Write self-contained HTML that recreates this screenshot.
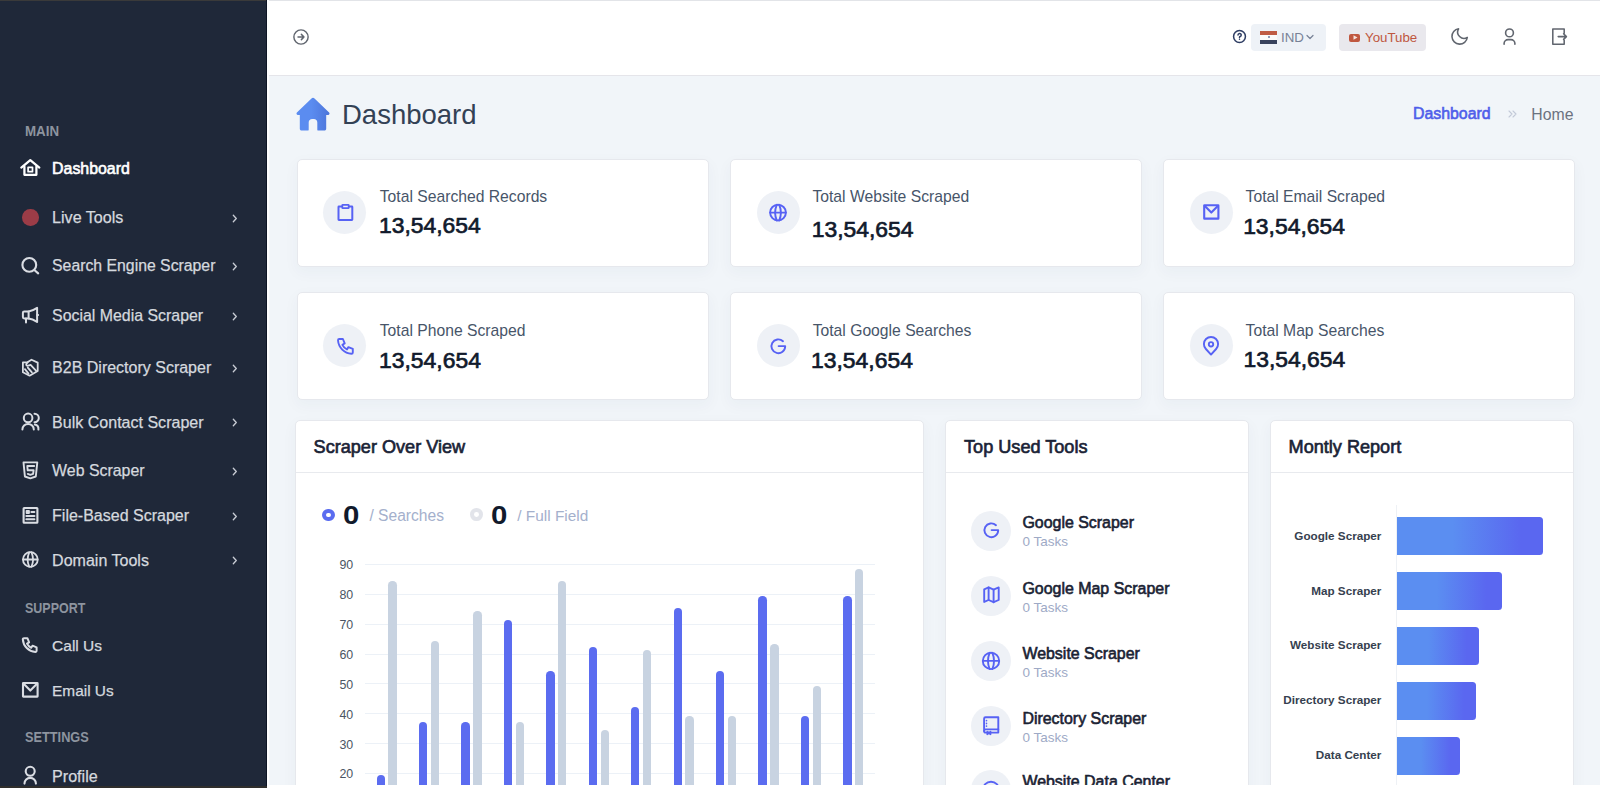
<!DOCTYPE html>
<html><head><meta charset="utf-8"><title>Dashboard</title>
<style>
*{box-sizing:border-box;margin:0;padding:0}
html,body{width:1600px;height:788px;overflow:hidden}
body{font-family:"Liberation Sans",sans-serif;background:#f1f5f9;position:relative}
.a{position:absolute}
.t{position:absolute;line-height:1;white-space:nowrap}
.card{background:#fff;border:1px solid #e6e8ed;border-radius:5px;box-shadow:0 5px 14px 2px rgba(40,55,90,0.032)}
</style></head><body>
<div class="a" style="left:0;top:0;width:266px;height:788px;background:#1f2839"></div>
<div class="a" style="left:266px;top:0;width:1px;height:788px;background:#0c1424"></div>
<div class="a" style="left:267px;top:0;width:2px;height:788px;background:#fdfdfe"></div>
<div class="a" style="left:0;top:0;width:266px;height:1px;background:#3a3a3a"></div>
<div class="a" style="left:0;top:786px;width:267px;height:2px;background:#2f2e2c"></div>
<div class="t" style="left:25.01px;top:123.72px;font-size:14.1px;font-weight:700;color:#8d949f;transform:scaleX(0.945);transform-origin:0 0">MAIN</div>
<div class="t" style="left:25.01px;top:600.72px;font-size:14.1px;font-weight:700;color:#8d949f;transform:scaleX(0.885);transform-origin:0 0">SUPPORT</div>
<div class="t" style="left:25.01px;top:729.72px;font-size:14.1px;font-weight:700;color:#8d949f;transform:scaleX(0.905);transform-origin:0 0">SETTINGS</div>
<div class="t" style="left:52.09px;top:161.19px;font-size:15.9px;font-weight:400;color:#ffffff;-webkit-text-stroke:0.6px #ffffff">Dashboard</div>
<div class="t" style="left:52.07px;top:209.41px;font-size:16.1px;font-weight:400;color:#d5d9df;-webkit-text-stroke:0.25px #d5d9df">Live Tools</div>
<div class="t" style="left:52.09px;top:257.67px;font-size:15.8px;font-weight:400;color:#d5d9df;-webkit-text-stroke:0.25px #d5d9df">Search Engine Scraper</div>
<div class="t" style="left:52.09px;top:307.58px;font-size:15.9px;font-weight:400;color:#d5d9df;-webkit-text-stroke:0.25px #d5d9df">Social Media Scraper</div>
<div class="t" style="left:52.08px;top:360.00px;font-size:16.0px;font-weight:400;color:#d5d9df;-webkit-text-stroke:0.25px #d5d9df">B2B Directory Scraper</div>
<div class="t" style="left:52.08px;top:413.96px;font-size:16.05px;font-weight:400;color:#d5d9df;-webkit-text-stroke:0.25px #d5d9df">Bulk Contact Scraper</div>
<div class="t" style="left:52.09px;top:462.58px;font-size:15.9px;font-weight:400;color:#d5d9df;-webkit-text-stroke:0.25px #d5d9df">Web Scraper</div>
<div class="t" style="left:52.08px;top:507.50px;font-size:16.0px;font-weight:400;color:#d5d9df;-webkit-text-stroke:0.25px #d5d9df">File-Based Scraper</div>
<div class="t" style="left:52.08px;top:552.06px;font-size:16.05px;font-weight:400;color:#d5d9df;-webkit-text-stroke:0.25px #d5d9df">Domain Tools</div>
<div class="t" style="left:52.12px;top:638.23px;font-size:15.5px;font-weight:400;color:#d5d9df;-webkit-text-stroke:0.25px #d5d9df">Call Us</div>
<div class="t" style="left:52.12px;top:682.81px;font-size:15.4px;font-weight:400;color:#d5d9df;-webkit-text-stroke:0.25px #d5d9df">Email Us</div>
<div class="t" style="left:52.07px;top:767.52px;font-size:16.1px;font-weight:400;color:#d5d9df;-webkit-text-stroke:0.25px #d5d9df">Profile</div>
<svg class="a" style="left:231px;top:213.7px;" width="8" height="9" viewBox="0 0 8 9" fill="none" stroke="#c9cdd5" stroke-width="1.3" stroke-linecap="round" stroke-linejoin="round"><path d="M2.3 1.3l3 3.2-3 3.2"/></svg>
<svg class="a" style="left:231px;top:261.7px;" width="8" height="9" viewBox="0 0 8 9" fill="none" stroke="#c9cdd5" stroke-width="1.3" stroke-linecap="round" stroke-linejoin="round"><path d="M2.3 1.3l3 3.2-3 3.2"/></svg>
<svg class="a" style="left:231px;top:311.7px;" width="8" height="9" viewBox="0 0 8 9" fill="none" stroke="#c9cdd5" stroke-width="1.3" stroke-linecap="round" stroke-linejoin="round"><path d="M2.3 1.3l3 3.2-3 3.2"/></svg>
<svg class="a" style="left:231px;top:364.2px;" width="8" height="9" viewBox="0 0 8 9" fill="none" stroke="#c9cdd5" stroke-width="1.3" stroke-linecap="round" stroke-linejoin="round"><path d="M2.3 1.3l3 3.2-3 3.2"/></svg>
<svg class="a" style="left:231px;top:418.2px;" width="8" height="9" viewBox="0 0 8 9" fill="none" stroke="#c9cdd5" stroke-width="1.3" stroke-linecap="round" stroke-linejoin="round"><path d="M2.3 1.3l3 3.2-3 3.2"/></svg>
<svg class="a" style="left:231px;top:466.7px;" width="8" height="9" viewBox="0 0 8 9" fill="none" stroke="#c9cdd5" stroke-width="1.3" stroke-linecap="round" stroke-linejoin="round"><path d="M2.3 1.3l3 3.2-3 3.2"/></svg>
<svg class="a" style="left:231px;top:511.70000000000005px;" width="8" height="9" viewBox="0 0 8 9" fill="none" stroke="#c9cdd5" stroke-width="1.3" stroke-linecap="round" stroke-linejoin="round"><path d="M2.3 1.3l3 3.2-3 3.2"/></svg>
<svg class="a" style="left:231px;top:556.3px;" width="8" height="9" viewBox="0 0 8 9" fill="none" stroke="#c9cdd5" stroke-width="1.3" stroke-linecap="round" stroke-linejoin="round"><path d="M2.3 1.3l3 3.2-3 3.2"/></svg>
<svg class="a" style="left:18px;top:155px" width="24" height="24" viewBox="0 0 24 24" fill="none" stroke="#ffffff" stroke-width="2.25" stroke-linecap="round" stroke-linejoin="round"><path d="M3.3 12.6L12.3 5.2L21.3 12.6"/><path d="M6.4 11.6V19.8H18.4V11.6"/><rect x="10.1" y="12.3" width="4.4" height="4.4" stroke-width="1.7"/></svg>
<div class="a" style="left:22px;top:209px;width:16.5px;height:16.5px;border-radius:50%;background:#9b3c47"></div>
<svg class="a" style="left:18px;top:253px" width="24" height="24" viewBox="0 0 24 24" fill="none" stroke="#dadde3" stroke-width="2.1" stroke-linecap="round" stroke-linejoin="round"><circle cx="11.3" cy="11.9" r="6.9"/><path d="M16.6 17.2L20.2 20.4"/></svg>
<svg class="a" style="left:18px;top:303px" width="24" height="24" viewBox="0 0 24 24" fill="none" stroke="#dadde3" stroke-width="2" stroke-linecap="round" stroke-linejoin="round"><path d="M6.2 8.4H10.6V15.4H6.2A1.3 1.3 0 0 1 4.9 14.1V9.7A1.3 1.3 0 0 1 6.2 8.4z"/><path d="M10.6 8.4C13.6 8.2 16.3 6.8 19.1 4.9V18.9C16.3 17 13.6 15.6 10.6 15.4"/><path d="M8 15.6V19.6"/><path d="M19.3 11.9h0.8"/></svg>
<svg class="a" style="left:18px;top:355px" width="24" height="24" viewBox="0 0 24 24" fill="none" stroke="#dadde3" stroke-width="1.8" stroke-linecap="round" stroke-linejoin="round"><path d="M4.9 7.4L9.4 7.3L13.5 4.7L19.7 7.6V15.9L11.6 20.7L4.9 17.2z"/><path d="M9.6 7.4C7.9 8.6 7.6 10.6 9.5 10.9L12.6 9.9L18.2 15.8"/><path d="M6.9 14.1L10.5 18.6"/><path d="M9.8 12.6L13.9 17.4"/></svg>
<svg class="a" style="left:18px;top:409px" width="24" height="24" viewBox="0 0 24 24" fill="none" stroke="#dadde3" stroke-width="2" stroke-linecap="round" stroke-linejoin="round"><circle cx="10.1" cy="8.9" r="4.3"/><path d="M16.5 4.7a4.3 4.3 0 0 1 0 8.6"/><path d="M4.4 20.6a5.7 5.7 0 0 1 11.4 0"/><path d="M16.8 15.6a4.6 4.6 0 0 1 3.6 5"/></svg>
<svg class="a" style="left:18px;top:458px" width="24" height="24" viewBox="0 0 24 24" fill="none" stroke="#dadde3" stroke-width="1.9" stroke-linecap="round" stroke-linejoin="round"><path d="M5.5 4.4H19.3L17.8 18.5L12.3 20.4L6.9 18.5z"/><path d="M16.2 8H9.3L9.7 12.3H15.6L15.1 15.8L12.3 16.8L9.8 15.9"/></svg>
<svg class="a" style="left:18px;top:503px" width="24" height="24" viewBox="0 0 24 24" fill="none" stroke="#dadde3" stroke-width="2.1" stroke-linecap="round" stroke-linejoin="round"><rect x="5.6" y="5" width="13.8" height="14.8" rx="0.6"/><rect x="8.6" y="8" width="2.4" height="2" stroke-width="1.8"/><path d="M13.4 9h2.9M8.4 13h8M8.4 16.3h8"/></svg>
<svg class="a" style="left:18px;top:547px" width="24" height="24" viewBox="0 0 24 24" fill="none" stroke="#dadde3" stroke-width="1.8" stroke-linecap="round" stroke-linejoin="round"><circle cx="12.35" cy="12.5" r="7.4"/><path d="M5.2 12.5h14.3"/><path d="M11.2 5.3c-1.9 4.5-1.9 9.9 0 14.4M13.5 5.3c1.9 4.5 1.9 9.9 0 14.4"/></svg>
<svg class="a" style="left:18px;top:633px" width="24" height="24" viewBox="0 0 24 24" fill="none" stroke="#dadde3" stroke-width="2" stroke-linecap="round" stroke-linejoin="round"><path d="M6 5.2h3.4l1.7 4.1-2.1 1.3a9.3 9.3 0 0 0 4.2 4.2l1.3-2.1 4.1 1.7v3.4a1.2 1.2 0 0 1-1.2 1.2A13.6 13.6 0 0 1 4.8 6.4 1.2 1.2 0 0 1 6 5.2"/></svg>
<svg class="a" style="left:18px;top:678px" width="24" height="24" viewBox="0 0 24 24" fill="none" stroke="#dadde3" stroke-width="2.1" stroke-linecap="round" stroke-linejoin="round"><rect x="5" y="5" width="14.6" height="13.6" rx="0.3"/><path d="M5.6 5.8L12.3 12.6L19 5.8"/></svg>
<svg class="a" style="left:18px;top:762px" width="24" height="24" viewBox="0 0 24 24" fill="none" stroke="#dadde3" stroke-width="2.1" stroke-linecap="round" stroke-linejoin="round"><circle cx="12.2" cy="9.3" r="4.5"/><path d="M6.5 21.6a5.7 5.7 0 0 1 11.4 0"/></svg>
<div class="a" style="left:269px;top:0;width:1331px;height:75px;background:#fff"></div>
<div class="a" style="left:269px;top:0;width:1331px;height:1px;background:#e2e4e8"></div>
<div class="a" style="left:269px;top:75px;width:1331px;height:1px;background:#e5e5ea"></div>
<svg class="a" style="left:292px;top:28px;" width="18" height="18" viewBox="0 0 24 24" fill="none" stroke="#61666f" stroke-width="1.9" stroke-linecap="round" stroke-linejoin="round"><circle cx="12" cy="12" r="9.5"/><path d="M8 12h8M12.5 8.5L16 12l-3.5 3.5"/></svg>
<svg class="a" style="left:1232px;top:28.5px;" width="15" height="15" viewBox="0 0 24 24" fill="none" stroke="#2e3d63" stroke-width="2.4" stroke-linecap="round" stroke-linejoin="round"><circle cx="12" cy="12" r="9.5"/><path d="M12 16.5v.01M12 13.5a1.5 1.5 0 0 1 1-1.4 2.6 2.6 0 1 0-3.4-2.6"/></svg>
<div class="a" style="left:1251px;top:24px;width:75px;height:27px;border-radius:4px;background:#eef2f7"></div>
<div class="a" style="left:1260px;top:31px;width:17px;height:4px;background:#bf5b44"></div>
<div class="a" style="left:1260px;top:35px;width:17px;height:4.5px;background:#fafafa"></div>
<div class="a" style="left:1260px;top:39.5px;width:17px;height:4px;background:#38425c"></div>
<div class="a" style="left:1267.5px;top:36.2px;width:2px;height:2px;border-radius:50%;background:#6a7aa0"></div>
<div class="t" style="left:1280.94px;top:31.19px;font-size:13.3px;font-weight:400;color:#778196;">IND</div>
<svg class="a" style="left:1306px;top:34px;" width="8" height="6" viewBox="0 0 8 6" fill="none" stroke="#778196" stroke-width="1.2" stroke-linecap="round" stroke-linejoin="round"><path d="M1 1.5l3 3 3-3"/></svg>
<div class="a" style="left:1339px;top:24px;width:87px;height:27px;border-radius:4px;background:#e9e8ed"></div>
<div class="a" style="left:1349px;top:33.5px;width:11px;height:8.5px;border-radius:2px;background:#c0573f"></div>
<svg class="a" style="left:1352.5px;top:35.2px" width="5" height="5" viewBox="0 0 5 5"><path d="M0.5 0.3L4.5 2.5L0.5 4.7z" fill="#f5e4de"/></svg>
<div class="t" style="left:1365.00px;top:31.19px;font-size:13.3px;font-weight:400;color:#bf573f;">YouTube</div>
<svg class="a" style="left:1440px;top:15px" width="40" height="40" viewBox="0 0 40 40" fill="none" stroke="#61666f" stroke-width="1.55" stroke-linecap="round" stroke-linejoin="round"><path d="M18.6 13.8A7.7 7.7 0 1 0 27.3 22.4A6.3 6.3 0 0 1 18.6 13.8z"/></svg>
<svg class="a" style="left:1490px;top:15px" width="40" height="40" viewBox="0 0 40 40" fill="none" stroke="#61666f" stroke-width="1.6" stroke-linecap="round" stroke-linejoin="round"><circle cx="19.5" cy="17.9" r="3.9"/><path d="M14.1 29.3V28.6A4 4 0 0 1 18.1 24.6H20.9A4 4 0 0 1 24.9 28.6V29.3"/></svg>
<svg class="a" style="left:1540px;top:15px" width="40" height="40" viewBox="0 0 40 40" fill="none" stroke="#61666f" stroke-width="1.55" stroke-linecap="round" stroke-linejoin="round"><path d="M24.2 18.2V13.9H12.8V29.3H24.2V25.2"/><path d="M18.2 21.6H26.4M23.6 18.8L26.4 21.6L23.6 24.4"/></svg>
<svg class="a" style="left:294.5px;top:97px" width="36" height="35" viewBox="0 0 36 35"><defs><linearGradient id="hg" x1="0" x2="1" y1="0" y2="0"><stop offset="0.45" stop-color="#5b8cf0"/><stop offset="1" stop-color="#4d75da"/></linearGradient></defs><path d="M18 0.8c0.6 0 1.1 0.2 1.5 0.6l14.6 14.2c0.9 0.9 0.3 2.4-1 2.4h-1.9v13.8c0 1-0.8 1.8-1.8 1.8h-6.2c-0.5 0-0.9-0.4-0.9-0.9v-7.2c0-1.9-1.5-3.4-3.4-3.4h-1.8c-1.9 0-3.4 1.5-3.4 3.4v7.2c0 0.5-0.4 0.9-0.9 0.9H6.6c-1 0-1.8-0.8-1.8-1.8V18H2.9c-1.3 0-1.9-1.5-1-2.4L16.5 1.4c0.4-0.4 0.9-0.6 1.5-0.6z" fill="url(#hg)"/></svg>
<div class="t" style="left:342.00px;top:100.83px;font-size:27.5px;font-weight:400;color:#334155;">Dashboard</div>
<div class="t" style="left:1412.93px;top:106.48px;font-size:15.9px;font-weight:400;color:#4f5eea;-webkit-text-stroke:0.6px #4f5eea">Dashboard</div>
<svg class="a" style="left:1508px;top:110px;" width="9" height="8" viewBox="0 0 9 8" fill="none" stroke="#c3cad8" stroke-width="1.1" stroke-linecap="round" stroke-linejoin="round"><path d="M1 1l3 3-3 3M5 1l3 3-3 3"/></svg>
<div class="t" style="left:1531.34px;top:106.57px;font-size:15.8px;font-weight:400;color:#6b7280;">Home</div>
<div class="a card" style="left:297.0px;top:159.0px;width:412.0px;height:108.0px"></div>
<div class="a" style="left:323.2px;top:190.5px;width:43px;height:43px;border-radius:50%;background:#eef1f6"></div>
<div class="t" style="left:379.79px;top:189.45px;font-size:15.7px;font-weight:400;color:#475569;">Total Searched Records</div>
<div class="t" style="left:378.94px;top:214.43px;font-size:22.9px;font-weight:400;color:#111a2c;-webkit-text-stroke:0.7px #111a2c">13,54,654</div>
<svg class="a" style="left:332.7px;top:200px" width="24" height="24" viewBox="0 0 24 24" fill="none" stroke="#5762f4" stroke-width="2" stroke-linecap="round" stroke-linejoin="round"><rect x="5.5" y="6.6" width="13.8" height="13.4" rx="0.4"/><rect x="9.3" y="4.9" width="6.4" height="3.2" rx="0.4" fill="#eef1f6" stroke-width="1.8"/></svg>
<div class="a card" style="left:730.0px;top:159.0px;width:412.0px;height:108.0px"></div>
<div class="a" style="left:756.7px;top:190.6px;width:43px;height:43px;border-radius:50%;background:#eef1f6"></div>
<div class="t" style="left:812.44px;top:189.45px;font-size:15.7px;font-weight:400;color:#475569;">Total Website Scraped</div>
<div class="t" style="left:811.69px;top:217.83px;font-size:22.9px;font-weight:400;color:#111a2c;-webkit-text-stroke:0.7px #111a2c">13,54,654</div>
<svg class="a" style="left:766.2px;top:200.1px" width="24" height="24" viewBox="0 0 24 24" fill="none" stroke="#5762f4" stroke-width="1.9" stroke-linecap="round" stroke-linejoin="round"><circle cx="12" cy="12.6" r="7.9"/><path d="M4.2 12.6h15.6"/><path d="M10.7 4.8c-2 5-2 10.6 0 15.6M13.3 4.8c2 5 2 10.6 0 15.6"/></svg>
<div class="a card" style="left:1163.0px;top:159.0px;width:412.0px;height:108.0px"></div>
<div class="a" style="left:1189.5px;top:190.9px;width:43px;height:43px;border-radius:50%;background:#eef1f6"></div>
<div class="t" style="left:1245.59px;top:189.45px;font-size:15.7px;font-weight:400;color:#475569;">Total Email Scraped</div>
<div class="t" style="left:1243.14px;top:215.23px;font-size:22.9px;font-weight:400;color:#111a2c;-webkit-text-stroke:0.7px #111a2c">13,54,654</div>
<svg class="a" style="left:1199px;top:200.4px" width="24" height="24" viewBox="0 0 24 24" fill="none" stroke="#5762f4" stroke-width="2.1" stroke-linecap="round" stroke-linejoin="round"><rect x="5.2" y="5.2" width="14.2" height="13.4" rx="0.2"/><path d="M5.8 6L12.3 12.6L18.8 6"/></svg>
<div class="a card" style="left:297.0px;top:292.0px;width:412.0px;height:108.0px"></div>
<div class="a" style="left:323.3px;top:324.1px;width:43px;height:43px;border-radius:50%;background:#eef1f6"></div>
<div class="t" style="left:379.79px;top:323.25px;font-size:15.7px;font-weight:400;color:#475569;">Total Phone Scraped</div>
<div class="t" style="left:379.04px;top:348.84px;font-size:22.9px;font-weight:400;color:#111a2c;-webkit-text-stroke:0.7px #111a2c">13,54,654</div>
<svg class="a" style="left:332.8px;top:333.6px" width="24" height="24" viewBox="0 0 24 24" fill="none" stroke="#5762f4" stroke-width="1.9" stroke-linecap="round" stroke-linejoin="round"><path d="M6.3 5h3.6l1.8 4.4-2.3 1.4a10 10 0 0 0 4.6 4.6l1.4-2.3 4.4 1.8v3.6a1.3 1.3 0 0 1-1.3 1.3A14.6 14.6 0 0 1 5 6.3 1.3 1.3 0 0 1 6.3 5"/></svg>
<div class="a card" style="left:730.0px;top:292.0px;width:412.0px;height:108.0px"></div>
<div class="a" style="left:756.9px;top:324.4px;width:43px;height:43px;border-radius:50%;background:#eef1f6"></div>
<div class="t" style="left:812.69px;top:323.35px;font-size:15.7px;font-weight:400;color:#475569;">Total Google Searches</div>
<div class="t" style="left:811.04px;top:348.74px;font-size:22.9px;font-weight:400;color:#111a2c;-webkit-text-stroke:0.7px #111a2c">13,54,654</div>
<svg class="a" style="left:766.4px;top:333.9px" width="24" height="24" viewBox="0 0 24 24" fill="none" stroke="#5762f4" stroke-width="1.9" stroke-linecap="round" stroke-linejoin="round"><path d="M12.6 12.1H19.2M19.2 12.3A6.9 6.9 0 1 1 17 7.2"/></svg>
<div class="a card" style="left:1163.0px;top:292.0px;width:412.0px;height:108.0px"></div>
<div class="a" style="left:1189.5px;top:324.1px;width:43px;height:43px;border-radius:50%;background:#eef1f6"></div>
<div class="t" style="left:1245.59px;top:323.25px;font-size:15.7px;font-weight:400;color:#475569;">Total Map Searches</div>
<div class="t" style="left:1243.44px;top:347.63px;font-size:22.9px;font-weight:400;color:#111a2c;-webkit-text-stroke:0.7px #111a2c">13,54,654</div>
<svg class="a" style="left:1199px;top:333.6px" width="24" height="24" viewBox="0 0 24 24" fill="none" stroke="#5762f4" stroke-width="1.9" stroke-linecap="round" stroke-linejoin="round"><circle cx="12" cy="10.3" r="2.2"/><path d="M12 20.6L6.9 15A7.1 7.1 0 1 1 17.1 15z"/></svg>
<div class="a card" style="left:295px;top:420px;width:629px;height:400px"></div>
<div class="a" style="left:296px;top:472px;width:627px;height:1px;background:#e8eaee"></div>
<div class="t" style="left:313.58px;top:437.71px;font-size:18.1px;font-weight:400;color:#1a2336;-webkit-text-stroke:0.65px #1a2336">Scraper Over View</div>
<div class="a card" style="left:945px;top:420px;width:304px;height:400px"></div>
<div class="a" style="left:946px;top:472px;width:302px;height:1px;background:#e8eaee"></div>
<div class="t" style="left:964.08px;top:437.71px;font-size:18.1px;font-weight:400;color:#1a2336;-webkit-text-stroke:0.65px #1a2336">Top Used Tools</div>
<div class="a card" style="left:1270px;top:420px;width:304px;height:400px"></div>
<div class="a" style="left:1271px;top:472px;width:302px;height:1px;background:#e8eaee"></div>
<div class="t" style="left:1288.58px;top:437.71px;font-size:18.1px;font-weight:400;color:#1a2336;-webkit-text-stroke:0.65px #1a2336">Montly Report</div>
<div class="a" style="left:322px;top:508.7px;width:12.6px;height:12.6px;border-radius:50%;border:4.2px solid #5a6cf0;background:#fff"></div>
<div class="t" style="left:343.31px;top:503.17px;font-size:25.8px;font-weight:700;color:#111a2c;transform:scaleX(1.14);transform-origin:0 0">0</div>
<div class="t" style="left:369.40px;top:507.64px;font-size:15.6px;font-weight:400;color:#a4b0cc;">/ Searches</div>
<div class="a" style="left:470px;top:508.4px;width:12.8px;height:12.8px;border-radius:50%;border:4.2px solid #e2e4ea;background:#fff"></div>
<div class="t" style="left:491.11px;top:503.37px;font-size:25.8px;font-weight:700;color:#111a2c;transform:scaleX(1.14);transform-origin:0 0">0</div>
<div class="t" style="left:517.30px;top:507.81px;font-size:15.4px;font-weight:400;color:#a4b0cc;">/ Full Field</div>
<div class="a" style="left:364.6px;top:563.8px;width:510px;height:1px;background:#ecf1f7"></div>
<div class="t" style="left:339.40px;top:559.16px;font-size:12.4px;font-weight:400;color:#4b5563;">90</div>
<div class="a" style="left:364.6px;top:593.7px;width:510px;height:1px;background:#ecf1f7"></div>
<div class="t" style="left:339.40px;top:589.06px;font-size:12.4px;font-weight:400;color:#4b5563;">80</div>
<div class="a" style="left:364.6px;top:623.6px;width:510px;height:1px;background:#ecf1f7"></div>
<div class="t" style="left:339.40px;top:618.96px;font-size:12.4px;font-weight:400;color:#4b5563;">70</div>
<div class="a" style="left:364.6px;top:653.5px;width:510px;height:1px;background:#ecf1f7"></div>
<div class="t" style="left:339.40px;top:648.86px;font-size:12.4px;font-weight:400;color:#4b5563;">60</div>
<div class="a" style="left:364.6px;top:683.4px;width:510px;height:1px;background:#ecf1f7"></div>
<div class="t" style="left:339.40px;top:678.76px;font-size:12.4px;font-weight:400;color:#4b5563;">50</div>
<div class="a" style="left:364.6px;top:713.3px;width:510px;height:1px;background:#ecf1f7"></div>
<div class="t" style="left:339.40px;top:708.66px;font-size:12.4px;font-weight:400;color:#4b5563;">40</div>
<div class="a" style="left:364.6px;top:743.2px;width:510px;height:1px;background:#ecf1f7"></div>
<div class="t" style="left:339.40px;top:738.56px;font-size:12.4px;font-weight:400;color:#4b5563;">30</div>
<div class="a" style="left:364.6px;top:773.1px;width:510px;height:1px;background:#ecf1f7"></div>
<div class="t" style="left:339.40px;top:768.46px;font-size:12.4px;font-weight:400;color:#4b5563;">20</div>
<div class="a" style="left:364.6px;top:803.0px;width:510px;height:1px;background:#ecf1f7"></div>
<div class="t" style="left:339.40px;top:798.36px;font-size:12.4px;font-weight:400;color:#4b5563;">10</div>
<div class="a" style="left:376.6px;top:775.3px;width:8.4px;height:24.7px;border-radius:4.2px 4.2px 0 0;background:#5b6cf0"></div>
<div class="a" style="left:388.4px;top:580.9px;width:8.4px;height:219.1px;border-radius:4.2px 4.2px 0 0;background:#c8d3e1"></div>
<div class="a" style="left:419.0px;top:721.5px;width:8.4px;height:78.5px;border-radius:4.2px 4.2px 0 0;background:#5b6cf0"></div>
<div class="a" style="left:430.8px;top:640.7px;width:8.4px;height:159.3px;border-radius:4.2px 4.2px 0 0;background:#c8d3e1"></div>
<div class="a" style="left:461.4px;top:721.5px;width:8.4px;height:78.5px;border-radius:4.2px 4.2px 0 0;background:#5b6cf0"></div>
<div class="a" style="left:473.2px;top:610.8px;width:8.4px;height:189.2px;border-radius:4.2px 4.2px 0 0;background:#c8d3e1"></div>
<div class="a" style="left:503.9px;top:619.8px;width:8.4px;height:180.2px;border-radius:4.2px 4.2px 0 0;background:#5b6cf0"></div>
<div class="a" style="left:515.7px;top:721.5px;width:8.4px;height:78.5px;border-radius:4.2px 4.2px 0 0;background:#c8d3e1"></div>
<div class="a" style="left:546.3px;top:670.6px;width:8.4px;height:129.4px;border-radius:4.2px 4.2px 0 0;background:#5b6cf0"></div>
<div class="a" style="left:558.1px;top:580.9px;width:8.4px;height:219.1px;border-radius:4.2px 4.2px 0 0;background:#c8d3e1"></div>
<div class="a" style="left:588.7px;top:646.7px;width:8.4px;height:153.3px;border-radius:4.2px 4.2px 0 0;background:#5b6cf0"></div>
<div class="a" style="left:600.5px;top:730.4px;width:8.4px;height:69.6px;border-radius:4.2px 4.2px 0 0;background:#c8d3e1"></div>
<div class="a" style="left:631.1px;top:706.5px;width:8.4px;height:93.5px;border-radius:4.2px 4.2px 0 0;background:#5b6cf0"></div>
<div class="a" style="left:642.9px;top:649.7px;width:8.4px;height:150.3px;border-radius:4.2px 4.2px 0 0;background:#c8d3e1"></div>
<div class="a" style="left:673.5px;top:607.9px;width:8.4px;height:192.1px;border-radius:4.2px 4.2px 0 0;background:#5b6cf0"></div>
<div class="a" style="left:685.3px;top:715.5px;width:8.4px;height:84.5px;border-radius:4.2px 4.2px 0 0;background:#c8d3e1"></div>
<div class="a" style="left:716.0px;top:670.6px;width:8.4px;height:129.4px;border-radius:4.2px 4.2px 0 0;background:#5b6cf0"></div>
<div class="a" style="left:727.8px;top:715.5px;width:8.4px;height:84.5px;border-radius:4.2px 4.2px 0 0;background:#c8d3e1"></div>
<div class="a" style="left:758.4px;top:595.9px;width:8.4px;height:204.1px;border-radius:4.2px 4.2px 0 0;background:#5b6cf0"></div>
<div class="a" style="left:770.2px;top:643.7px;width:8.4px;height:156.3px;border-radius:4.2px 4.2px 0 0;background:#c8d3e1"></div>
<div class="a" style="left:800.8px;top:715.5px;width:8.4px;height:84.5px;border-radius:4.2px 4.2px 0 0;background:#5b6cf0"></div>
<div class="a" style="left:812.6px;top:685.6px;width:8.4px;height:114.4px;border-radius:4.2px 4.2px 0 0;background:#c8d3e1"></div>
<div class="a" style="left:843.2px;top:595.9px;width:8.4px;height:204.1px;border-radius:4.2px 4.2px 0 0;background:#5b6cf0"></div>
<div class="a" style="left:855.0px;top:569.0px;width:8.4px;height:231.0px;border-radius:4.2px 4.2px 0 0;background:#c8d3e1"></div>
<div class="a" style="left:971px;top:510.8px;width:40px;height:40px;border-radius:50%;background:#eef1f6"></div>
<div class="t" style="left:1022.40px;top:515.24px;font-size:15.95px;font-weight:400;color:#1a2233;-webkit-text-stroke:0.6px #1a2233">Google Scraper</div>
<div class="t" style="left:1022.53px;top:535.23px;font-size:13.5px;font-weight:400;color:#9eaac6;">0 Tasks</div>
<svg class="a" style="left:978.8px;top:518.8px" width="24" height="24" viewBox="0 0 24 24" fill="none" stroke="#5762f4" stroke-width="1.9" stroke-linecap="round" stroke-linejoin="round"><path d="M12.6 11.1H19.2M19.2 11.3A6.9 6.9 0 1 1 17 6.2"/></svg>
<div class="a" style="left:971px;top:575.7px;width:40px;height:40px;border-radius:50%;background:#eef1f6"></div>
<div class="t" style="left:1022.40px;top:580.94px;font-size:15.95px;font-weight:400;color:#1a2233;-webkit-text-stroke:0.6px #1a2233">Google Map Scraper</div>
<div class="t" style="left:1022.53px;top:600.92px;font-size:13.5px;font-weight:400;color:#9eaac6;">0 Tasks</div>
<svg class="a" style="left:978.8px;top:583.7px" width="24" height="24" viewBox="0 0 24 24" fill="none" stroke="#5762f4" stroke-width="1.9" stroke-linecap="round" stroke-linejoin="round"><path d="M5.2 5.3L9.6 3.4L14.6 5.6L19.7 3.4V16L14.6 18.2L9.6 16L5.2 17.9z"/><path d="M9.6 3.4V16M14.6 5.6V18.2"/></svg>
<div class="a" style="left:971px;top:640.6px;width:40px;height:40px;border-radius:50%;background:#eef1f6"></div>
<div class="t" style="left:1022.40px;top:645.54px;font-size:15.95px;font-weight:400;color:#1a2233;-webkit-text-stroke:0.6px #1a2233">Website Scraper</div>
<div class="t" style="left:1022.53px;top:665.52px;font-size:13.5px;font-weight:400;color:#9eaac6;">0 Tasks</div>
<svg class="a" style="left:978.8px;top:648.6px" width="24" height="24" viewBox="0 0 24 24" fill="none" stroke="#5762f4" stroke-width="1.9" stroke-linecap="round" stroke-linejoin="round"><circle cx="12" cy="11.9" r="8.2"/><path d="M4 11.9h16"/><path d="M10.6 3.8c-2 5-2 11.2 0 16.2M13.4 3.8c2 5 2 11.2 0 16.2"/></svg>
<div class="a" style="left:971px;top:705.5px;width:40px;height:40px;border-radius:50%;background:#eef1f6"></div>
<div class="t" style="left:1022.40px;top:711.24px;font-size:15.95px;font-weight:400;color:#1a2233;-webkit-text-stroke:0.6px #1a2233">Directory Scraper</div>
<div class="t" style="left:1022.53px;top:731.23px;font-size:13.5px;font-weight:400;color:#9eaac6;">0 Tasks</div>
<svg class="a" style="left:978.8px;top:713.5px" width="24" height="24" viewBox="0 0 24 24" fill="none" stroke="#5762f4" stroke-width="1.9" stroke-linecap="round" stroke-linejoin="round"><path d="M6.5 3.3H19.3V15.4H6.7A1.6 1.6 0 0 0 5.1 17V4.7A1.4 1.4 0 0 1 6.5 3.3z"/><path d="M5.1 17A1.6 1.6 0 0 0 6.7 18.6H19.3V15.4"/><path d="M7.5 6.5v.3M7.5 9.3v.3M7.5 12v.3" stroke-width="1.6"/><path d="M8.2 17.6V20.4L9.9 19.3L11.6 20.4V17.6" fill="#5762f4" stroke-width="1.5"/></svg>
<div class="a" style="left:971px;top:770.4px;width:40px;height:40px;border-radius:50%;background:#eef1f6"></div>
<div class="t" style="left:1022.40px;top:774.44px;font-size:15.95px;font-weight:400;color:#1a2233;-webkit-text-stroke:0.6px #1a2233">Website Data Center</div>
<div class="t" style="left:1022.53px;top:794.42px;font-size:13.5px;font-weight:400;color:#9eaac6;">0 Tasks</div>
<svg class="a" style="left:978.8px;top:778.4px" width="24" height="24" viewBox="0 0 24 24" fill="none" stroke="#5762f4" stroke-width="1.9" stroke-linecap="round" stroke-linejoin="round"><circle cx="12" cy="12" r="8.2"/></svg>
<div class="a" style="left:1396px;top:505px;width:1px;height:300px;background:#eef1f5"></div>
<div class="a" style="left:1397px;top:516.9px;width:145.8px;height:38.4px;border-radius:0 3.5px 3.5px 0;background:linear-gradient(90deg,#5b8ef1 0%,#5b8ef1 38%,#5a67f0 85%,#5a67f0 100%)"></div>
<div class="t" style="right:218.6px;top:529.6px;font-size:11.7px;font-weight:700;color:#363f4f;text-align:right">Google Scraper</div>
<div class="a" style="left:1397px;top:571.8px;width:105.1px;height:38.4px;border-radius:0 3.5px 3.5px 0;background:linear-gradient(90deg,#5b8ef1 0%,#5b8ef1 38%,#5a67f0 85%,#5a67f0 100%)"></div>
<div class="t" style="right:218.6px;top:584.5px;font-size:11.7px;font-weight:700;color:#363f4f;text-align:right">Map Scraper</div>
<div class="a" style="left:1397px;top:626.7px;width:82.2px;height:38.4px;border-radius:0 3.5px 3.5px 0;background:linear-gradient(90deg,#5b8ef1 0%,#5b8ef1 38%,#5a67f0 85%,#5a67f0 100%)"></div>
<div class="t" style="right:218.6px;top:639.4px;font-size:11.7px;font-weight:700;color:#363f4f;text-align:right">Website Scraper</div>
<div class="a" style="left:1397px;top:681.6px;width:78.8px;height:38.4px;border-radius:0 3.5px 3.5px 0;background:linear-gradient(90deg,#5b8ef1 0%,#5b8ef1 38%,#5a67f0 85%,#5a67f0 100%)"></div>
<div class="t" style="right:218.6px;top:694.3px;font-size:11.7px;font-weight:700;color:#363f4f;text-align:right">Directory Scraper</div>
<div class="a" style="left:1397px;top:736.5px;width:63.0px;height:38.4px;border-radius:0 3.5px 3.5px 0;background:linear-gradient(90deg,#5b8ef1 0%,#5b8ef1 38%,#5a67f0 85%,#5a67f0 100%)"></div>
<div class="t" style="right:218.6px;top:749.2px;font-size:11.7px;font-weight:700;color:#363f4f;text-align:right">Data Center</div>
<div class="a" style="left:269px;top:785px;width:1331px;height:3px;background:#fff"></div>
</body></html>
